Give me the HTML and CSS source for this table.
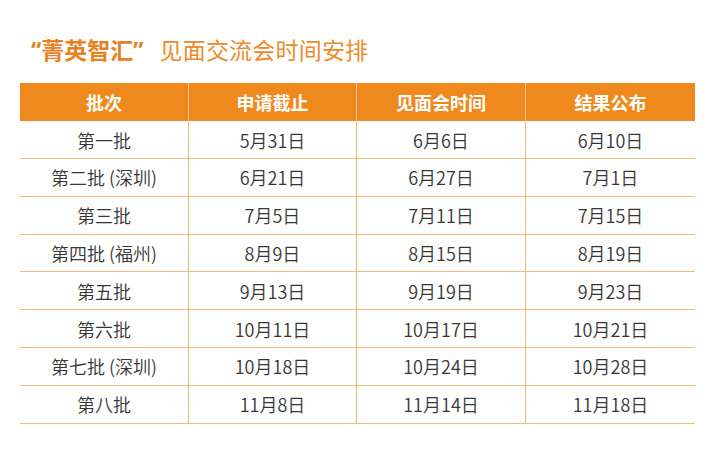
FILE: index.html
```html
<!DOCTYPE html>
<html lang="zh-CN">
<head>
<meta charset="utf-8">
<link rel="stylesheet" href="styles.css">
</head>
<body>
<div class="page">
  <h1 class="title"><span class="brand"><span class="q">“</span>菁英智汇<span class="q">”</span></span><span class="sub">见面交流会时间安排</span></h1>
  <div class="table">
    <div class="row head">
      <div class="cell">批次</div><div class="cell">申请截止</div><div class="cell">见面会时间</div><div class="cell">结果公布</div>
    </div>
    <div class="row"><div class="cell">第一批</div><div class="cell">5月31日</div><div class="cell">6月6日</div><div class="cell">6月10日</div></div>
    <div class="row"><div class="cell">第二批 (深圳)</div><div class="cell">6月21日</div><div class="cell">6月27日</div><div class="cell">7月1日</div></div>
    <div class="row"><div class="cell">第三批</div><div class="cell">7月5日</div><div class="cell">7月11日</div><div class="cell">7月15日</div></div>
    <div class="row"><div class="cell">第四批 (福州)</div><div class="cell">8月9日</div><div class="cell">8月15日</div><div class="cell">8月19日</div></div>
    <div class="row"><div class="cell">第五批</div><div class="cell">9月13日</div><div class="cell">9月19日</div><div class="cell">9月23日</div></div>
    <div class="row"><div class="cell">第六批</div><div class="cell">10月11日</div><div class="cell">10月17日</div><div class="cell">10月21日</div></div>
    <div class="row"><div class="cell">第七批 (深圳)</div><div class="cell">10月18日</div><div class="cell">10月24日</div><div class="cell">10月28日</div></div>
    <div class="row"><div class="cell">第八批</div><div class="cell">11月8日</div><div class="cell">11月14日</div><div class="cell">11月18日</div></div>
  </div>
</div>
</body>
</html>
```

FILE: styles.css
```css
html, body {
  margin: 0;
  padding: 0;
  background: #ffffff;
}
.page {
  width: 711px;
  height: 464px;
  font-family: "Noto Sans CJK SC", "Noto Sans", sans-serif;
  padding-top: 34px;
  box-sizing: border-box;
}
.title {
  margin: 0 0 0 31px;
  height: 31px;
  line-height: 31px;
  font-size: 23px;
  font-weight: 400;
  color: #ec8a2a;
  white-space: nowrap;
}
.title .brand {
  font-weight: 700;
  color: #e6821f;
  margin-right: 16px;
}
.title .q {
  font-family: "Noto Sans", "Liberation Sans", sans-serif;
  font-weight: 700;
}
.title .sub {
  letter-spacing: 0.2px;
}
.table {
  margin: 18px 0 0 20px;
  width: 675px;
}
.row {
  display: grid;
  grid-template-columns: 169px 168px 169px 169px;
  height: 37.8px;
  box-sizing: border-box;
  border-bottom: 1px solid #efbd82;
}
.row.head {
  height: 38.2px;
  background: #ef891d;
  border-bottom: none;
}
.cell {
  display: flex;
  align-items: center;
  justify-content: center;
  font-size: 18px;
  font-weight: 350;
  color: #363636;
  border-right: 1px solid #edb87a;
  white-space: nowrap;
}
.cell:last-child {
  border-right: none;
}
.head .cell {
  color: #ffffff;
  font-weight: 700;
  font-size: 18px;
  border-right-color: #f6c58f;
}
```
